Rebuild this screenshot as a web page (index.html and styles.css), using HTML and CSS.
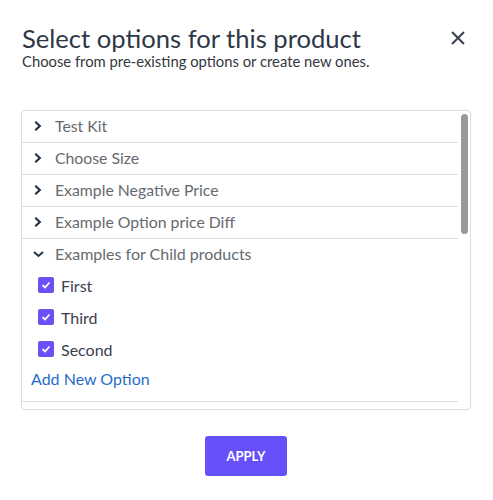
FILE: index.html
```html
<!DOCTYPE html>
<html>
<head>
<meta charset="utf-8">
<link rel="stylesheet" href="styles.css">
</head>
<body>
<div class="modal">
  <div class="header">
    <div class="titles">
      <h1 class="title">Select options for this product</h1>
      <p class="subtitle">Choose from pre-existing options or create new ones.</p>
    </div>
    <button class="close" aria-label="Close">
      <svg width="16" height="16" viewBox="0 0 16 16"><path d="M2 2L14 14M14 2L2 14" stroke="#3a4050" stroke-width="2" fill="none"/></svg>
    </button>
  </div>
  <div class="listbox">
    <div class="list">
      <div class="row"><span class="chev"><svg width="10" height="10" viewBox="0 0 10 10"><path d="M2.3 0.8L6.8 5L2.3 9.2" stroke="#243045" stroke-width="2.2" fill="none"/></svg></span><span class="label">Test Kit</span></div>
      <div class="row"><span class="chev"><svg width="10" height="10" viewBox="0 0 10 10"><path d="M2.3 0.8L6.8 5L2.3 9.2" stroke="#243045" stroke-width="2.2" fill="none"/></svg></span><span class="label">Choose Size</span></div>
      <div class="row"><span class="chev"><svg width="10" height="10" viewBox="0 0 10 10"><path d="M2.3 0.8L6.8 5L2.3 9.2" stroke="#243045" stroke-width="2.2" fill="none"/></svg></span><span class="label">Example Negative Price</span></div>
      <div class="row"><span class="chev"><svg width="10" height="10" viewBox="0 0 10 10"><path d="M2.3 0.8L6.8 5L2.3 9.2" stroke="#243045" stroke-width="2.2" fill="none"/></svg></span><span class="label">Example Option price Diff</span></div>
      <div class="group">
        <div class="row open"><span class="chev"><svg width="11" height="10" viewBox="0 0 11 10"><path d="M1 3L5.5 7L10 3" stroke="#243045" stroke-width="2" fill="none"/></svg></span><span class="label">Examples for Child products</span></div>
        <label class="opt"><span class="box"><svg width="10" height="10" viewBox="0 0 10 10"><path d="M1.5 5.2L4 7.5L8.5 2.5" stroke="#fff" stroke-width="1.8" fill="none"/></svg></span>First</label>
        <label class="opt"><span class="box"><svg width="10" height="10" viewBox="0 0 10 10"><path d="M1.5 5.2L4 7.5L8.5 2.5" stroke="#fff" stroke-width="1.8" fill="none"/></svg></span>Third</label>
        <label class="opt"><span class="box"><svg width="10" height="10" viewBox="0 0 10 10"><path d="M1.5 5.2L4 7.5L8.5 2.5" stroke="#fff" stroke-width="1.8" fill="none"/></svg></span>Second</label>
        <a class="add" href="#">Add New Option</a>
      </div>
    </div>
    <div class="track"><div class="thumb"></div></div>
  </div>
  <div class="actions">
    <button class="apply">APPLY</button>
  </div>
</div>
</body>
</html>
```
FILE: styles.css
```css
* { box-sizing: border-box; }
body { margin: 0; background: #fff; font-family: Lato, "Open Sans", sans-serif; }
.modal { padding: 23px 22px 0 21px; width: 493px; }
.header { display: flex; justify-content: space-between; align-items: flex-start; }
.title { margin: 0; font-size: 25.6px; font-weight: 400; color: #2f3747; line-height: 30px; padding-left: 1px; }
.subtitle { margin: 0 0 0 1px; font-size: 14.8px; color: #333740; line-height: 17px; }
.close { background: none; border: 0; padding: 0; margin: 7px 5px 0 0; width: 16px; height: 16px; display: flex; }
.listbox { margin-top: 40px; border: 1px solid #dcdcdc; border-radius: 4px; display: flex; height: 300px; overflow: hidden; }
.list { flex: 1; }
.row { height: 32px; border-bottom: 1px solid #dcdcdc; display: flex; align-items: center; padding-left: 11px; padding-bottom: 2px; font-size: 15.8px; color: #666a70; }
.row.open { border-bottom: 0; height: 31px; font-size: 16px; }
.chev { width: 11px; height: 10px; display: flex; margin-right: 11px; }
.group { border-bottom: 1px solid #dcdcdc; padding-bottom: 13px; }
.opt { display: flex; align-items: center; height: 32px; padding-left: 16px; padding-bottom: 2px; font-size: 16px; color: #3b4150; }
.box { width: 16px; height: 16px; border-radius: 2px; background: #6c4ff7; display: flex; align-items: center; justify-content: center; margin-right: 7px; }
.add { display: block; margin: 3px 0 0 9px; font-size: 16px; color: #1f6ec9; text-decoration: none; line-height: 19px; }
.track { width: 12px; padding: 3px 2px 0 3px; }
.thumb { width: 7px; height: 120px; background: #999; border-radius: 4px; }
.actions { display: flex; justify-content: center; margin-top: 26px; }
.apply { width: 82px; height: 40px; background: #6650fa; color: #fff; border: 0; border-radius: 3px; font-family: Lato, sans-serif; font-weight: 700; font-size: 13px; }
```
